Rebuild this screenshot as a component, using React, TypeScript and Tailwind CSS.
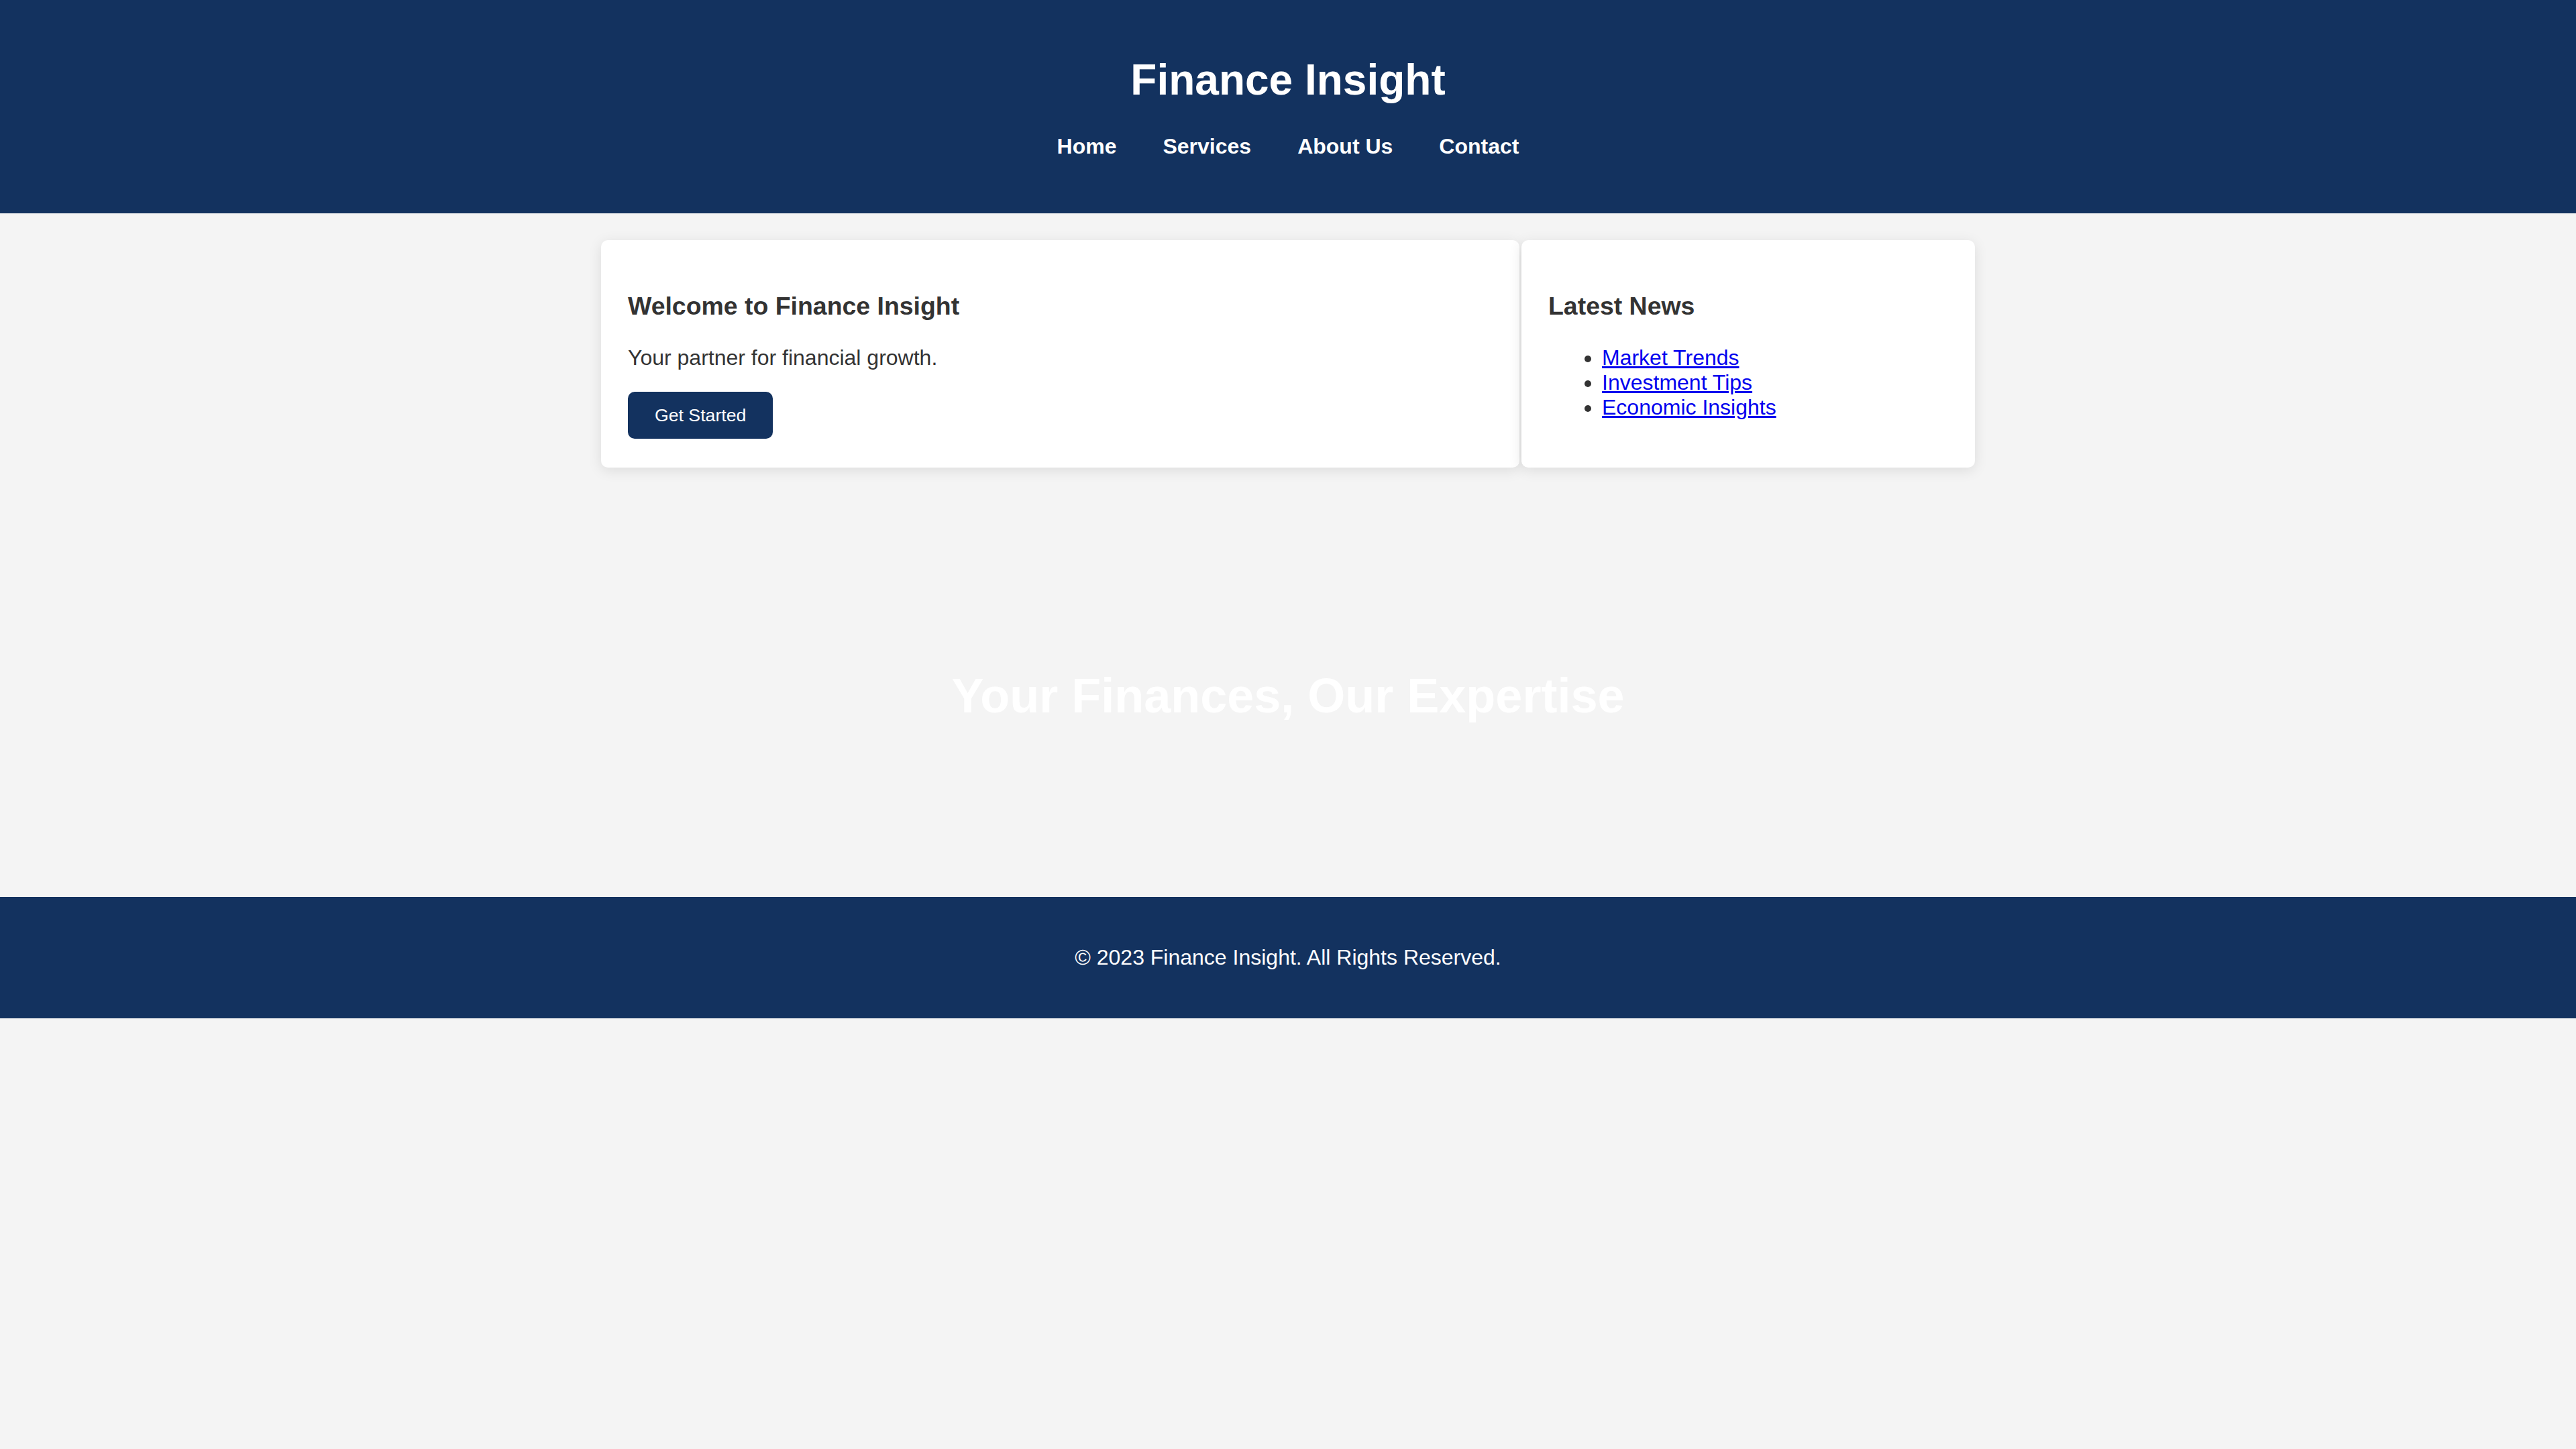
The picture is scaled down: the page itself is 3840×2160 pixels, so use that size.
import React from "react";

const navLinks = ["Home", "Services", "About Us", "Contact"];
const news = ["Market Trends", "Investment Tips", "Economic Insights"];

export default function App() {
  return (
    <div className="min-h-screen bg-[#f4f4f4] text-[#333] font-['Liberation_Sans',Arial,sans-serif]">
      <header className="h-[318px] bg-[#13325f] pt-[40px] text-center text-white">
        <h1 className="mt-[43px] text-[64px] font-bold leading-[73.6px]">
          Finance Insight
        </h1>
        <nav className="mt-[43px]">
          <ul className="flex justify-center gap-[69px] text-[32px] font-bold leading-[36.8px]">
            {navLinks.map((link) => (
              <li key={link}>
                <a href="#" className="text-white">
                  {link}
                </a>
              </li>
            ))}
          </ul>
        </nav>
      </header>

      <main className="mx-auto w-[2048px] py-[40px]">
        <div className="grid grid-cols-[1369px_676px] gap-[3px]">
          <section className="rounded-[10px] bg-white p-[40px] shadow-[0_4px_20px_rgba(0,0,0,0.1)]">
            <h3 className="mt-[37px] text-[37.44px] font-bold leading-[43px]">
              Welcome to Finance Insight
            </h3>
            <p className="mt-[37px] text-[32px] leading-[36.8px]">
              Your partner for financial growth.
            </p>
            <button className="mt-[32px] rounded-[10px] bg-[#13325f] px-[40px] py-[20px] text-[26.67px] leading-[30.6px] text-white">
              Get Started
            </button>
          </section>
          <aside className="rounded-[10px] bg-white p-[40px] shadow-[0_4px_20px_rgba(0,0,0,0.1)]">
            <h3 className="mt-[37px] text-[37.44px] font-bold leading-[43px]">
              Latest News
            </h3>
            <ul className="mt-[37px] mb-[32px] list-disc pl-[80px] text-[32px] leading-[36.8px]">
              {news.map((item) => (
                <li key={item}>
                  <a href="#" className="text-[#0000ee] underline">
                    {item}
                  </a>
                </li>
              ))}
            </ul>
          </aside>
        </div>
      </main>

      <section className="flex h-[600px] items-center justify-center text-white">
        <h2 className="text-[72px] font-bold leading-[83px]">
          Your Finances, Our Expertise
        </h2>
      </section>

      <footer className="flex h-[181px] items-center justify-center bg-[#13325f] text-white">
        <p className="text-[32px] leading-[36.8px]">
          © 2023 Finance Insight. All Rights Reserved.
        </p>
      </footer>
    </div>
  );
}
